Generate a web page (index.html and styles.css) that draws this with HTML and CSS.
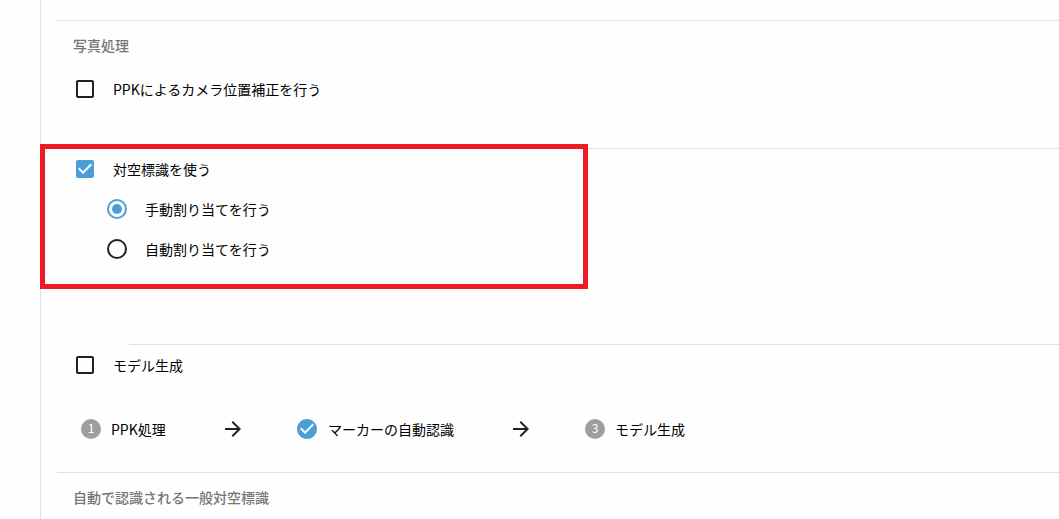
FILE: index.html
```html
<!DOCTYPE html>
<html lang="ja">
<head>
<meta charset="utf-8">
<title>写真処理</title>
<link rel="stylesheet" href="styles.css">
</head>
<body>
<main class="panel">
  <section class="section photo">
    <h2 class="heading">写真処理</h2>
    <label class="row">
      <svg class="icon" viewBox="0 0 24 24"><path d="M19 5v14H5V5h14m0-2H5c-1.100 0-2 .9-2 2v14c0 1.100.9 2 2 2h14c1.100 0 2-.9 2-2V5c0-1.100-.9-2-2-2z"/></svg>
      <span class="label">PPKによるカメラ位置補正を行う</span>
    </label>
  </section>

  <section class="section marker">
    <label class="row">
      <svg class="icon active" viewBox="0 0 24 24"><path d="M19 3H5c-1.110 0-2 .9-2 2v14c0 1.100.89 2 2 2h14c1.110 0 2-.9 2-2V5c0-1.100-.89-2-2-2zm-9 14l-5-5 1.410-1.410L10 14.170l7.590-7.590L19 8l-9 9z"/></svg>
      <span class="label">対空標識を使う</span>
    </label>
    <div class="options">
      <label class="row">
        <svg class="icon active" viewBox="0 0 24 24"><circle class="ring" cx="12" cy="12" r="9"/><circle cx="12" cy="12" r="5"/></svg>
        <span class="label">手動割り当てを行う</span>
      </label>
      <label class="row">
        <svg class="icon" viewBox="0 0 24 24"><circle class="ring" cx="12" cy="12" r="9"/></svg>
        <span class="label">自動割り当てを行う</span>
      </label>
    </div>
    <div class="highlight"></div>
  </section>

  <section class="section model">
    <label class="row">
      <svg class="icon" viewBox="0 0 24 24"><path d="M19 5v14H5V5h14m0-2H5c-1.100 0-2 .9-2 2v14c0 1.100.9 2 2 2h14c1.100 0 2-.9 2-2V5c0-1.100-.9-2-2-2z"/></svg>
      <span class="label">モデル生成</span>
    </label>
    <div class="steps">
      <div class="step"><span class="badge">1</span><span class="label">PPK処理</span></div>
      <svg class="icon arrow" viewBox="0 0 24 24"><path d="M12 4l-1.410 1.410L16.170 11H4v2h12.170l-5.580 5.590L12 20l8-8z"/></svg>
      <div class="step wide"><svg class="icon active done" viewBox="0 0 24 24"><path d="M12 2C6.480 2 2 6.480 2 12s4.480 10 10 10 10-4.480 10-10S17.520 2 12 2zm-2 15l-5-5 1.410-1.410L10 14.170l7.590-7.590L19 8l-9 9z"/></svg><span class="label">マーカーの自動認識</span></div>
      <svg class="icon arrow last" viewBox="0 0 24 24"><path d="M12 4l-1.410 1.410L16.170 11H4v2h12.170l-5.580 5.590L12 20l8-8z"/></svg>
      <div class="step"><span class="badge">3</span><span class="label">モデル生成</span></div>
    </div>
  </section>

  <section class="section">
    <h2 class="heading">自動で認識される一般対空標識</h2>
  </section>
</main>
</body>
</html>
```

FILE: styles.css
```css
* {
  box-sizing: border-box;
}

body {
  margin: 0;
  height: 519px;
  overflow: hidden;
  background: #fefefe;
  color: #212121;
  font: 14px/20px "Noto Sans CJK JP", sans-serif;
}

.panel {
  height: 519px;
  margin-left: 40px;
  padding: 20px 0 0 16px;
  border-left: 1px solid #e0e0e0;
}

.section {
  padding-left: 16px;
  border-top: 1px solid #e0e0e0;
}

.photo {
  height: 128px;
}

.marker {
  position: relative;
  height: 196px;
}

/* The divider above this section starts after the checkbox column. */
.model {
  height: 128px;
  border-top: 0;
  padding-top: 1px;
  background: linear-gradient(#e0e0e0, #e0e0e0) 72px 0 / 100% 1px no-repeat;
}

.heading {
  display: flex;
  align-items: center;
  height: 48px;
  margin: 0;
  color: #757575;
  font-size: 14px;
  font-weight: 500;
}

.row {
  display: flex;
  align-items: center;
  gap: 16px;
  height: 40px;
}

.label {
  color: #000;
}

.icon {
  flex: none;
  width: 24px;
  height: 24px;
  fill: #212121;
  stroke: none;
}

.icon.active {
  fill: #4c9fd6;
}

.icon .ring {
  fill: none;
  stroke: #212121;
  stroke-width: 2;
}

.icon.active .ring {
  stroke: #4c9fd6;
}

.options {
  padding-left: 32px;
}

.highlight {
  position: absolute;
  top: -5px;
  left: -17px;
  width: 548px;
  height: 145px;
  border: 5px solid #ed1c24;
}

.steps {
  display: flex;
  align-items: center;
  height: 48px;
  margin-top: 20px;
  padding-left: 8px;
}

.step {
  display: flex;
  align-items: center;
  gap: 10px;
  width: 140px;
}

.step.wide {
  width: 214px;
}

.badge {
  width: 20px;
  height: 20px;
  border-radius: 50%;
  background: #9e9e9e;
  color: #fefefe;
  font-size: 12px;
  line-height: 18px;
  text-align: center;
}

.arrow {
  margin-right: 50px;
}

.arrow.last {
  margin-right: 52px;
}

.done {
  margin-right: -1px;
}
```
